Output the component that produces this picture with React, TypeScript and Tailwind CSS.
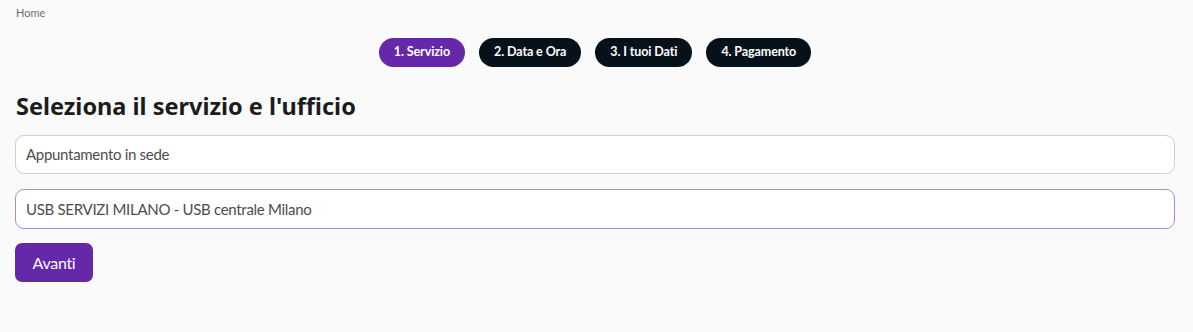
import React from "react";

export default function App() {
  const steps = ["1. Servizio", "2. Data e Ora", "3. I tuoi Dati", "4. Pagamento"];
  return (
    <div className="min-h-[332px] w-full bg-[#fafafa] px-[15px] pt-[6px]" style={{ fontFamily: "Lato, 'Noto Sans', sans-serif" }}>
      <div className="pl-px text-[11px] leading-[14px] text-[#6f6f6f]">Home</div>
      <div className="mt-[18px] flex justify-center gap-[14px] pr-[3px]">
        {steps.map((s, i) => (
          <div
            key={s}
            className={`flex h-[29px] items-center rounded-full px-[15px] text-[12.5px] font-bold tracking-[-0.1px] text-white ${i === 0 ? "bg-[#6528a8]" : "bg-[#07111a]"}`}
          >
            {s}
          </div>
        ))}
      </div>
      <h1 className="mt-[24px] pl-px text-[23.5px] font-bold leading-[30px] text-[#1c1c1c]" style={{ fontFamily: "'Noto Sans', sans-serif" }}>
        Seleziona il servizio e l'ufficio
      </h1>
      <div className="mt-[14px] flex h-[39px] w-[1160px] items-center rounded-[9px] border border-[#cfcfcf] bg-white px-[10px] text-[15px] tracking-[-0.3px] text-[#4d4d4d]">
        Appuntamento in sede
      </div>
      <div className="mt-[15px] flex h-[40px] w-[1160px] items-center rounded-[9px] border border-[#a88bd2] bg-white px-[10px] text-[15px] tracking-[-0.3px] text-[#4d4d4d]">
        USB SERVIZI MILANO - USB centrale Milano
      </div>
      <button className="mt-[14px] flex h-[39px] w-[78px] items-center justify-center rounded-[7px] bg-[#6528a8] text-[16px] tracking-[-0.3px] text-white">
        Avanti
      </button>
    </div>
  );
}
